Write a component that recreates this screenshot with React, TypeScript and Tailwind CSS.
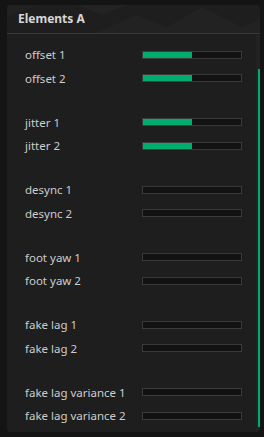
import React from "react";

const groups: { label: string; value: number }[][] = [
  [
    { label: "offset 1", value: 50 },
    { label: "offset 2", value: 50 },
  ],
  [
    { label: "jitter 1", value: 50 },
    { label: "jitter 2", value: 50 },
  ],
  [
    { label: "desync 1", value: 0 },
    { label: "desync 2", value: 0 },
  ],
  [
    { label: "foot yaw 1", value: 0 },
    { label: "foot yaw 2", value: 0 },
  ],
  [
    { label: "fake lag 1", value: 0 },
    { label: "fake lag 2", value: 0 },
  ],
  [
    { label: "fake lag variance 1", value: 0 },
    { label: "fake lag variance 2", value: 0 },
  ],
];

function Slider({ value }: { value: number }) {
  return (
    <div className="w-[100px] h-[8px] border border-[#3a3a3a] bg-[#121212] box-border">
      <div className="h-full bg-[#00ac6e]" style={{ width: `${value}%` }} />
    </div>
  );
}

export default function App() {
  return (
    <div
      className="w-[264px] h-[437px] bg-[#141414] pt-[5px] pl-[7px] pr-[4px] pb-[5px] box-border"
      style={{ fontFamily: '"Noto Sans", "Open Sans", sans-serif' }}
    >
      <div className="relative h-[427px] bg-[#1e1e1e] rounded-[4px] overflow-hidden">
        <div className="relative h-[29px] border-b border-[#383838] flex items-center pl-[11px] overflow-hidden">
          <svg
            className="absolute inset-0"
            width="253"
            height="29"
            viewBox="0 0 253 29"
          >
            <polygon points="70,0 95,10 125,-2" fill="#232323" />
            <polygon points="85,29 130,10 160,22 195,2 235,22 253,14 253,29" fill="#222222" />
            <polygon points="0,12 30,0 0,0" fill="#212121" />
          </svg>
          <span className="relative text-[12px] font-bold text-[#d6d6d6] leading-none">
            Elements A
          </span>
        </div>
        <div className="pt-[9px] pl-[18px] flex flex-col gap-[20.5px]">
          {groups.map((g, gi) => (
            <div key={gi} className="flex flex-col">
              {g.map((r) => (
                <div key={r.label} className="h-[23.5px] flex items-center">
                  <span className="w-[117px] text-[11.5px] text-[#cdcdcd] leading-none">
                    {r.label}
                  </span>
                  <Slider value={r.value} />
                </div>
              ))}
            </div>
          ))}
        </div>
        <div className="absolute right-0 top-[30px] bottom-0 w-[4px] bg-[#222222]">
          <div className="absolute right-0 top-[34px] bottom-[5px] w-[2px] bg-[#00ac6e]" />
        </div>
      </div>
    </div>
  );
}
